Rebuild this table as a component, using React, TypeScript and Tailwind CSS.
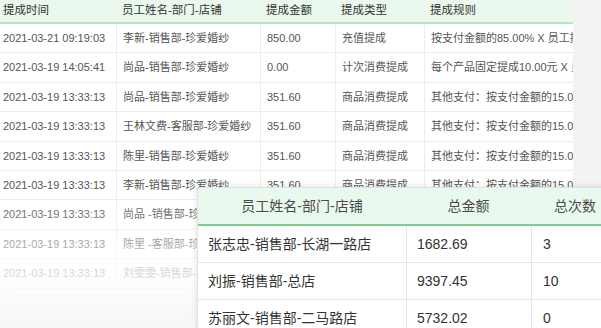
import type { ReactNode } from "react";

const font = { fontFamily: '"Liberation Sans", "Noto Sans CJK SC", sans-serif' };

const headers = ["提成时间", "员工姓名-部门-店铺", "提成金额", "提成类型", "提成规则"];

const rows = [
  ["2021-03-21 09:19:03", "李新-销售部-珍爱婚纱", "850.00", "充值提成", "按支付金额的85.00% X 员工提成比例"],
  ["2021-03-19 14:05:41", "尚品-销售部-珍爱婚纱", "0.00", "计次消费提成", "每个产品固定提成10.00元 X 员工提成比例"],
  ["2021-03-19 13:33:13", "尚品-销售部-珍爱婚纱", "351.60", "商品消费提成", "其他支付：按支付金额的15.00%"],
  ["2021-03-19 13:33:13", "王林文费-客服部-珍爱婚纱", "351.60", "商品消费提成", "其他支付：按支付金额的15.00%"],
  ["2021-03-19 13:33:13", "陈里-销售部-珍爱婚纱", "351.60", "商品消费提成", "其他支付：按支付金额的15.00%"],
  ["2021-03-19 13:33:13", "李新-销售部-珍爱婚纱", "351.60", "商品消费提成", "其他支付：按支付金额的15.00%"],
  ["2021-03-19 13:33:13", "尚品 -销售部-珍爱婚纱", "351.60", "商品消费提成", "其他支付：按支付金额的15.00%"],
  ["2021-03-19 13:33:13", "陈里 -客服部-珍爱婚纱", "351.60", "商品消费提成", "其他支付：按支付金额的15.00%"],
  ["2021-03-19 13:33:13", "刘雯雯-销售部-珍爱婚纱", "351.60", "商品消费提成", "其他支付：按支付金额的15.00%"],
];

const summary = [
  ["张志忠-销售部-长湖一路店", "1682.69", "3"],
  ["刘振-销售部-总店", "9397.45", "10"],
  ["苏丽文-销售部-二马路店", "5732.02", "0"],
];

const cols = "grid grid-cols-[116px_144px_75px_89px_149px]";

function Cell({ children, first }: { children: ReactNode; first?: boolean }) {
  return (
    <div
      className={`flex items-center overflow-hidden whitespace-nowrap ${
        first ? "pl-[3px]" : "border-l border-[#ececec] pl-[6px]"
      }`}
    >
      {children}
    </div>
  );
}

function CommissionTable() {
  return (
    <div className="w-[573px] shrink-0 bg-white">
      <div className={`${cols} h-[24px] border-b-2 border-[#b5e6bf] bg-[#eaf8ed] text-[11.5px] text-[#333]`}>
        {headers.map((h, i) => (
          <div
            key={h}
            className={`flex items-center whitespace-nowrap ${i === 0 ? "pl-[3px]" : "pl-[6px]"}`}
          >
            {h}
          </div>
        ))}
      </div>
      {rows.map((r, i) => (
        <div key={i} className={`${cols} h-[29.4px] border-b border-[#ececec] text-[11px] text-[#555]`}>
          {r.map((c, j) => (
            <Cell key={j} first={j === 0}>
              {c}
            </Cell>
          ))}
        </div>
      ))}
      <div className="mx-[12px] mt-[6px] w-[173px] border-t border-dotted border-[#d8d8d8]" />
    </div>
  );
}

function SummaryCard() {
  const grid = "grid grid-cols-[208px_125px_100px]";
  return (
    <div className="absolute left-[197px] top-[187px] w-[433px] overflow-hidden rounded-tl-[4px] border-l border-t border-[#e2e2e2] bg-white shadow-[0_0_6px_rgba(0,0,0,0.12)]">
      <div className={`${grid} h-[38px] border-b-2 border-[#7fd08d] bg-[#eaf9ee] text-[14px] text-[#4a4a4a]`}>
        <div className="flex items-center justify-center">员工姓名-部门-店铺</div>
        <div className="flex items-center justify-center">总金额</div>
        <div className="flex items-center pl-[23px]">总次数</div>
      </div>
      {summary.map((r) => (
        <div key={r[0]} className={`${grid} h-[37px] border-b border-[#e6e6e6] text-[14px] text-[#333]`}>
          <div className="flex items-center whitespace-nowrap pl-[10px]">{r[0]}</div>
          <div className="flex items-center border-l border-[#e6e6e6] pl-[10px]">{r[1]}</div>
          <div className="flex items-center border-l border-[#e6e6e6] pl-[11px]">{r[2]}</div>
        </div>
      ))}
    </div>
  );
}

export default function App() {
  return (
    <div className="relative h-[328px] w-[601px] overflow-hidden bg-[#f3f3f3]" style={font}>
      <div className="flex h-full">
        <CommissionTable />
      </div>
      <div className="pointer-events-none absolute inset-x-0 bottom-0 h-[130px] bg-gradient-to-b from-transparent via-white/75 via-55% to-[#f6f6f6]/95" />
      <SummaryCard />
    </div>
  );
}
